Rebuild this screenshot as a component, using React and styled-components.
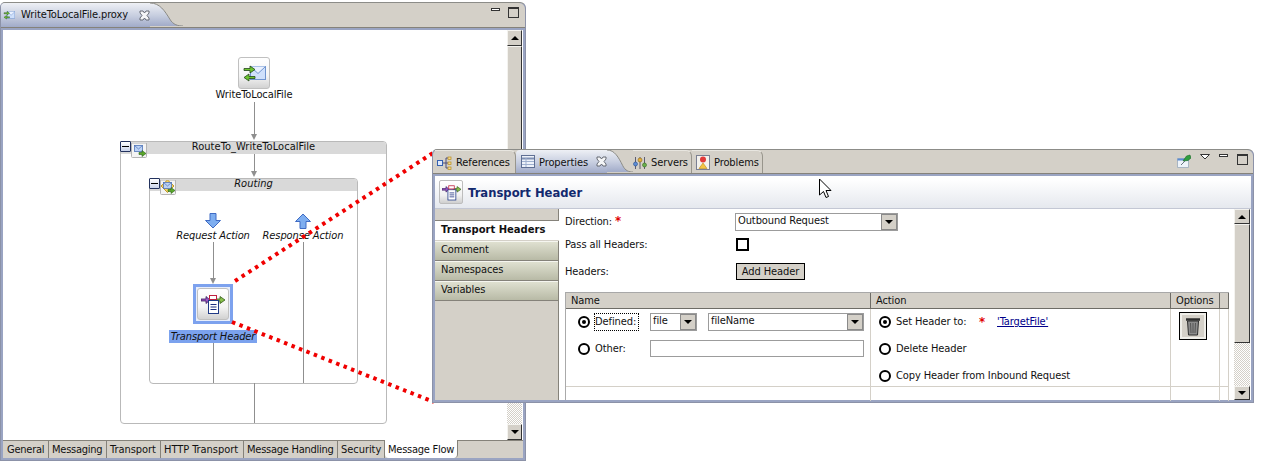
import styled, { createGlobalStyle } from "styled-components";

const GlobalStyle = createGlobalStyle`
  html, body {
    margin: 0;
    padding: 0;
    background: #fff;
  }
  body {
    font-family: "DejaVu Sans Condensed", "DejaVu Sans", sans-serif;
    font-stretch: condensed;
    font-size: 11px;
    letter-spacing: -0.1px;
    color: #111;
  }
`;

const Desktop = styled.div`
  position: relative;
  width: 1264px;
  height: 463px;
  overflow: hidden;
  background: #fff;
`;

const Frame = styled.div`
  position: absolute;
  left: ${(p) => p.$x}px;
  top: ${(p) => p.$y}px;
  width: ${(p) => p.$w}px;
  height: ${(p) => p.$h}px;
  box-sizing: border-box;
  display: flex;
  flex-direction: column;
  background: #9aa4c2;
  border: 1px solid #8c92a8;
  border-top-color: #8c8c88;
  border-radius: 5px 6px 0 0;
  z-index: ${(p) => p.$z};
`;

const TabStrip = styled.div`
  display: flex;
  align-items: stretch;
  height: ${(p) => p.$h}px;
  background: #d4d0c8;
  border-bottom: 1px solid #85827a;
  border-radius: 5px 6px 0 0;
  padding-left: ${(p) => p.$pad || 0}px;
  flex-shrink: 0;
`;

const ActiveTab = styled.div`
  display: flex;
  align-items: stretch;
  flex-shrink: 0;
`;

const ActiveBody = styled.div`
  display: flex;
  align-items: center;
  width: ${(p) => p.$w}px;
  box-sizing: border-box;
  padding-left: ${(p) => p.$pad}px;
  background: linear-gradient(#eef0f5, #c6cddf 55%, #a1abc9);
  border-radius: 4px 0 0 0;
  white-space: nowrap;
`;

const TabLabel = styled.span`
  margin-left: ${(p) => p.$ml}px;
  position: relative;
  top: ${(p) => p.$shift || 0}px;
`;

const CloseMark = styled.svg`
  display: block;
  flex-shrink: 0;
  margin-left: ${(p) => p.$gap}px;
`;

const InactiveTab = styled.div`
  display: flex;
  align-items: center;
  box-sizing: border-box;
  width: ${(p) => p.$w}px;
  padding-left: ${(p) => p.$pad}px;
  padding-top: 1px;
  gap: 4px;
  white-space: nowrap;
  flex-shrink: 0;
  border-right: 1px solid #98958c;
  border-top: 1px solid #e8e6e0;
  border-radius: 0 6px 0 0;
`;

const StripActions = styled.div`
  margin-left: auto;
  display: flex;
  align-items: flex-start;
  padding-top: ${(p) => p.$top}px;
  padding-right: ${(p) => p.$right}px;
  gap: ${(p) => p.$gap}px;
`;

const MinBox = styled.div`
  width: 9px;
  height: 3px;
  margin-top: ${(p) => p.$mt}px;
  border: 1px solid #333;
  box-sizing: border-box;
  background: #fff;
`;

const MaxBox = styled.div`
  width: 11px;
  height: 11px;
  border: 1px solid #333;
  border-top-width: 2px;
  box-sizing: border-box;
`;

const LeftBody = styled.div`
  flex: 1;
  display: flex;
  margin: 2px 2px 0 2px;
  background: #fff;
  min-height: 0;
`;

const Diagram = styled.div`
  position: relative;
  flex: 1;
`;

const ScrollBar = styled.div`
  display: flex;
  flex-direction: column;
  flex-shrink: 0;
  width: ${(p) => p.$w}px;
  margin-right: ${(p) => p.$mr || 0}px;
`;

const ScrollButton = styled.div`
  box-sizing: border-box;
  height: ${(p) => p.$h}px;
  background: #d4d0c8;
  border-top: 1px solid #f4f3ef;
  border-left: 1px solid #f4f3ef;
  border-right: 1px solid #333;
  border-bottom: 1px solid #333;
  display: flex;
  align-items: center;
  justify-content: center;
  flex-shrink: 0;
`;

const ScrollThumb = styled(ScrollButton)`
  display: block;
`;

const ScrollTrack = styled.div`
  flex: 1;
  background: repeating-conic-gradient(#d4d0c8 0 25%, #fff 0 50%) 0 0 / 2px 2px;
`;

const UpMark = styled.div`
  width: 0;
  height: 0;
  border-left: 4px solid transparent;
  border-right: 4px solid transparent;
  border-bottom: 4px solid #000;
`;

const DownMark = styled.div`
  width: 0;
  height: 0;
  border-left: 4px solid transparent;
  border-right: 4px solid transparent;
  border-top: 4px solid #000;
`;

const BottomTabs = styled.div`
  display: flex;
  height: 18px;
  margin: 0 2px;
  background: #d4d0c8;
  border-top: 1px solid #85827a;
  flex-shrink: 0;
  box-sizing: border-box;
`;

const BottomTab = styled.div`
  box-sizing: border-box;
  width: ${(p) => p.$w}px;
  padding-left: ${(p) => p.$pad || 4}px;
  line-height: 17px;
  letter-spacing: ${(p) => (p.$tight ? "-0.25px" : "-0.05px")};
  white-space: nowrap;
  border-right: 1px solid #85827a;
  ${(p) =>
    p.$active &&
    `background:#fff;border-radius:0 0 4px 4px;margin-top:-1px;height:18px;line-height:19px;`}
`;

const BottomRule = styled.div`
  height: 2px;
  flex-shrink: 0;
`;

/* diagram parts, placed on the canvas */
const Scope = styled.div`
  position: absolute;
  left: ${(p) => p.$x}px;
  top: ${(p) => p.$y}px;
  width: ${(p) => p.$w}px;
  height: ${(p) => p.$h}px;
  box-sizing: border-box;
  border: 1px solid #b9b9b9;
  border-radius: 4px;
`;

const ScopeHead = styled.div`
  height: ${(p) => p.$h}px;
  background: #d9d9d9;
  border-radius: 3px 3px 0 0;
  text-align: center;
  letter-spacing: 0.05px;
  line-height: ${(p) => p.$h - 2}px;
  font-style: ${(p) => (p.$italic ? "italic" : "normal")};
`;

const Collapse = styled.div`
  position: absolute;
  left: ${(p) => p.$x}px;
  top: ${(p) => p.$y}px;
  width: 11px;
  height: 11px;
  box-sizing: border-box;
  border: 1px solid #23325e;
  border-radius: 1px;
  background: linear-gradient(#fff, #c9d3ea);
  &::after {
    content: "";
    display: block;
    margin: 4px 1px 0;
    height: 1px;
    background: #000;
  }
`;

const PipeIcon = styled.svg`
  position: absolute;
  left: ${(p) => p.$x}px;
  top: ${(p) => p.$y}px;
`;

const ArrowSpot = styled.div`
  position: absolute;
  left: ${(p) => p.$x}px;
  top: ${(p) => p.$y}px;
`;

const NodeButton = styled.div`
  position: absolute;
  left: ${(p) => p.$x}px;
  top: ${(p) => p.$y}px;
  width: 32px;
  height: 32px;
  box-sizing: border-box;
  border: 1px solid #c0c0c0;
  border-radius: 3px;
  background: linear-gradient(#fff 0%, #f4f4f4 60%, #d2d2d2 100%);
  display: flex;
  align-items: flex-start;
  justify-content: center;
  padding-top: 3px;
`;

const SelectBox = styled.div`
  position: absolute;
  left: ${(p) => p.$x}px;
  top: ${(p) => p.$y}px;
  width: 40px;
  height: 40px;
  box-sizing: border-box;
  border: 3px solid #7da2ee;
  background: #e8eefb;
`;

const NodeLabel = styled.div`
  position: absolute;
  left: ${(p) => p.$cx - 60}px;
  top: ${(p) => p.$y}px;
  width: 120px;
  text-align: center;
  white-space: nowrap;
  line-height: 14px;
  font-style: ${(p) => (p.$italic ? "italic" : "normal")};
`;

const SelectedLabel = styled.div`
  position: absolute;
  left: ${(p) => p.$x}px;
  top: ${(p) => p.$y}px;
  width: 88px;
  height: 13px;
  line-height: 13px;
  text-align: center;
  background: #7ba2ee;
  font-style: italic;
  white-space: nowrap;
`;

const Wire = styled.div`
  position: absolute;
  left: ${(p) => p.$x}px;
  top: ${(p) => p.$y}px;
  width: 1px;
  height: ${(p) => p.$h}px;
  background: #8f8f8f;
`;

const WireHead = styled.div`
  position: absolute;
  left: ${(p) => p.$x - 3}px;
  top: ${(p) => p.$y}px;
  width: 0;
  height: 0;
  border-left: 3.5px solid transparent;
  border-right: 3.5px solid transparent;
  border-top: 6px solid #8f8f8f;
`;

const DotLines = styled.svg`
  position: absolute;
  left: 0;
  top: 0;
  z-index: 2;
`;

const Cursor = styled.svg`
  position: absolute;
  left: 818px;
  top: 178px;
  z-index: 5;
`;

/* right window */
const TitleBar = styled.div`
  display: flex;
  align-items: center;
  gap: 5px;
  height: 32px;
  margin: 2px 2px 0 2px;
  padding-left: 4px;
  flex-shrink: 0;
  background: linear-gradient(#fff 10%, #e5e8ee);
  border-bottom: 1px solid #c3c7d4;
`;

const TitleText = styled.div`
  font-family: "DejaVu Sans", sans-serif;
  font-stretch: normal;
  font-weight: bold;
  font-size: 11.6px;
  letter-spacing: 0;
  padding-top: 1px;
  color: #12296e;
`;

const TitleButton = styled.div`
  width: 24px;
  height: 24px;
  box-sizing: border-box;
  border: 1px solid #bdbdbd;
  border-radius: 2px;
  background: linear-gradient(#fff, #f1f1f1 65%, #cfcfcf);
  display: flex;
  align-items: center;
  justify-content: center;
`;

const PanelBody = styled.div`
  flex: 1;
  display: flex;
  margin: 0 2px;
  background: #fff;
  min-height: 0;
`;

const Sidebar = styled.div`
  width: 124px;
  flex-shrink: 0;
  background: #d4d0c8;
  border-right: 1px solid #85827a;
  box-sizing: border-box;
  display: flex;
  flex-direction: column;
`;

const SideCap = styled.div`
  height: 12px;
  flex-shrink: 0;
  box-sizing: border-box;
  border-bottom: 1px solid #85827a;
`;

const SideItem = styled.div`
  height: 20px;
  flex-shrink: 0;
  box-sizing: border-box;
  padding-left: 6px;
  line-height: 16px;
  background: linear-gradient(#dfe0d0, #b8baa6);
  border-top: 1px solid #f6f6f0;
  border-bottom: 1px solid #85827a;
  ${(p) =>
    p.$active &&
    `background:#fff;font-weight:bold;border-top:none;margin-right:-1px;border-bottom:1px solid #d4d0c8;font-family:"DejaVu Sans",sans-serif;font-size:10px;font-stretch:normal;letter-spacing:0;line-height:18px;`}
`;

const Content = styled.div`
  flex: 1;
  min-width: 0;
  padding: 3px 6px 0 6px;
  display: flex;
  flex-direction: column;
`;

const FormRow = styled.div`
  display: grid;
  grid-template-columns: 171px 1fr;
  align-items: center;
  height: ${(p) => p.$h}px;
  flex-shrink: 0;
`;

const FirstLabel = styled.div`
  padding-bottom: 2px;
`;

const Star = styled.span`
  color: #e00000;
  font-weight: bold;
  font-size: 13px;
  margin-left: ${(p) => p.$ml || 3}px;
`;

const Combo = styled.div`
  box-sizing: border-box;
  display: flex;
  width: ${(p) => p.$w}px;
  height: 18px;
  margin-left: ${(p) => p.$ml || 0}px;
  background: #fff;
  border: 1px solid #9c9c9c;
  flex-shrink: 0;
`;

const ComboText = styled.div`
  flex: 1;
  padding-left: 2px;
  line-height: 14px;
  white-space: nowrap;
`;

const ComboArrow = styled.div`
  width: 16px;
  box-sizing: border-box;
  background: #d4d0c8;
  border: 1px solid #8a8a8a;
  display: flex;
  align-items: center;
  justify-content: center;
`;

const CheckBox = styled.div`
  width: 13px;
  height: 13px;
  box-sizing: border-box;
  border: 2px solid #000;
  background: #fff;
`;

const PushButton = styled.div`
  width: 69px;
  height: 17px;
  box-sizing: border-box;
  border: 1px solid #000;
  background: #d4d0c8;
  text-align: center;
  line-height: 15px;
`;

const Table = styled.div`
  width: 663px;
  margin-top: 7px;
  display: flex;
  flex-direction: column;
  flex: 1;
  min-height: 0;
  border-left: 1px solid #aaa;
`;

const TableHead = styled.div`
  display: grid;
  grid-template-columns: 305px 300px 49px 9px;
  height: 17px;
  flex-shrink: 0;
  background: #d4d0c8;
  border-top: 1px solid #a8a8a8;
  border-bottom: 1px solid #6e6c66;
  box-sizing: border-box;
`;

const HeadCell = styled.div`
  box-sizing: border-box;
  padding-left: 5px;
  line-height: 15px;
  border-right: 1px solid #6e6c66;
`;

const TableRow = styled.div`
  display: grid;
  grid-template-columns: 305px 300px 49px 9px;
  height: ${(p) => p.$h}px;
  flex-shrink: 0;
  box-sizing: border-box;
  border-bottom: ${(p) => (p.$last ? "none" : "1px solid #d4d0c8")};
`;

const Cell = styled.div`
  box-sizing: border-box;
  border-right: 1px solid #d4d0c8;
  display: flex;
  flex-direction: column;
  padding: ${(p) => p.$pad || "0"};
`;

const OptionRow = styled.div`
  display: flex;
  align-items: center;
  height: 27px;
  flex-shrink: 0;
  &:first-child {
    margin-top: -1px;
  }
`;

const Radio = styled.div`
  width: 12px;
  height: 12px;
  box-sizing: border-box;
  border: 2px solid #000;
  border-radius: 50%;
  background: #fff;
  margin-right: 5px;
  flex-shrink: 0;
  display: flex;
  align-items: center;
  justify-content: center;
  &::after {
    content: "";
    display: ${(p) => (p.$on ? "block" : "none")};
    width: 4px;
    height: 4px;
    border-radius: 50%;
    background: #000;
  }
`;

const FocusLabel = styled.div`
  outline: 1px dotted #000;
  width: 43px;
  height: 16px;
  line-height: 16px;
  flex-shrink: 0;
`;

const PlainLabel = styled.div`
  width: ${(p) => p.$w || "auto"};
  white-space: nowrap;
  flex-shrink: 0;
`;

const TextInput = styled.div`
  width: 214px;
  height: 17px;
  box-sizing: border-box;
  border: 1px solid #9c9c9c;
  background: #fff;
  margin-left: 12px;
`;

const TargetLink = styled.a`
  color: #00008b;
  text-decoration: underline;
  margin-left: 12px;
`;

const TrashButton = styled.div`
  width: 28px;
  height: 28px;
  margin-top: 3px;
  box-sizing: border-box;
  border: 1px solid #000;
  background: #d4d0c8;
  display: flex;
  align-items: center;
  justify-content: center;
  box-shadow: inset 0 0 0 2px #efeee9;
`;

const ProxyGlyph = ({ size = 24 }) => (
  <svg width={size} height={size} viewBox="0 0 24 24">
    <rect x="8.500" y="5.500" width="15" height="13" fill="#cfe0fb" stroke="#6f94cf" />
    <path d="M8.500 5.500l7.500 7 7.500-7" fill="#eaf1ff" stroke="#6f94cf" />
    <path d="M2 7.500h6V5l5 3.500-5 3.500V9.500H2z" fill="#6cc52e" stroke="#23461a" strokeWidth=".8" />
    <path d="M13 15.500H7V13l-5 3.500L7 20v-2.500h6z" fill="#6cc52e" stroke="#23461a" strokeWidth=".8" />
  </svg>
);

const HeaderGlyph = ({ size = 24 }) => (
  <svg width={size} height={size} viewBox="0 0 24 24">
    <path d="M0 7h5V4.500L9 8l-4 3.500V9H0z" fill="#9a55c0" stroke="#35175e" strokeWidth=".8" />
    <path d="M14 7h5V4.500L24 8l-5 3.500V9h-5z" fill="#88c04c" stroke="#33591b" strokeWidth=".8" />
    <rect x="7.500" y="8.500" width="10" height="13" fill="#fff" stroke="#203a86" />
    <path d="M9.500 12.500h6M9.500 15h6M9.500 17.500h6" stroke="#1d2f80" strokeWidth="1" />
    <rect x="8.500" y="3.500" width="7" height="4" fill="#fff" stroke="#c02040" />
  </svg>
);

const PipeEnvelope = ({ x, y, diamond }) => (
  <PipeIcon $x={x} $y={y} width="16" height="15" viewBox="0 0 16 15">
    <path d="M.5 0v13.500a1 1 0 0 0 1 1h13a1 1 0 0 0 1-1V0z" fill="#f4f4f4" stroke="#b4b4b4" />
    {diamond && <path d="M7.500 0l6.500 6-6.500 6.500L1 6z" fill="#f5d265" stroke="#c09a2c" />}
    <rect x="3.500" y="2.500" width="8" height="6" fill="#bcd2f5" stroke="#4f74b8" strokeWidth=".8" />
    <path d="M3.500 2.500l4 3.500 4-3.500" fill="none" stroke="#4f74b8" strokeWidth=".7" />
    <path d="M8 9.500h3V7.500l4 3-4 3v-2H8z" fill="#5aa92a" stroke="#2a5f17" strokeWidth=".6" />
  </PipeIcon>
);

const ClosePath = ({ gap }) => (
  <CloseMark $gap={gap} width="11" height="11" viewBox="0 0 11 11">
    <path d="M1 1h3l1.500 2L7 1h3v2L8 5.500 10 8v2H7L5.500 8 4 10H1V8l2-2.500L1 3z" fill="#f4f5f7" stroke="#5a5f68" strokeWidth=".9" />
  </CloseMark>
);

const BlockArrow = ({ up }) => (
  <svg width="16" height="16" viewBox="0 0 16 16" style={up ? { transform: "scaleY(-1)" } : undefined}>
    <path d="M5 .5h6v7h4.500L8 15 .5 7.500H5z" fill="#7eaef0" stroke="#3f6bc4" />
  </svg>
);

const TabCurve = ({ w, h, id }) => (
  <svg width={w} height={h} viewBox={`0 0 ${w} ${h}`} style={{ display: "block", flexShrink: 0 }}>
    <defs>
      <linearGradient id={id} x1="0" y1="0" x2="0" y2="1">
        <stop offset="0" stopColor="#eef0f5" />
        <stop offset=".55" stopColor="#c6cddf" />
        <stop offset="1" stopColor="#a1abc9" />
      </linearGradient>
    </defs>
    <path d={`M0 0C${w * 0.3} 0 ${w * 0.45} ${h * 0.35} ${w * 0.6} ${h * 0.7}C${w * 0.7} ${h * 0.95} ${w * 0.85} ${h} ${w} ${h}H0z`} fill={`url(#${id})`} />
    <path d={`M0 0C${w * 0.3} 0 ${w * 0.45} ${h * 0.35} ${w * 0.6} ${h * 0.7}C${w * 0.7} ${h * 0.95} ${w * 0.85} ${h} ${w} ${h}`} fill="none" stroke="#8b8b86" />
  </svg>
);

const WindowActions = ({ top, right, gap, minTop, menu }) => (
  <StripActions $top={top} $right={right} $gap={gap}>
    {menu && (
      <>
        <svg width="14" height="14" viewBox="0 0 14 14">
          <path d="M.5 4.500h11v9H.5z" fill="#eef3fa" stroke="#9ab" strokeWidth=".8" />
          <path d="M.5 4.500h11v2H.5z" fill="#5b8ad0" />
          <path d="M6 7l3.500-5L13 1l1 3-3 2.500z" fill="#2f9e3f" stroke="#1c6a28" strokeWidth=".6" />
          <path d="M8 7l-4 4" stroke="#456" strokeWidth=".8" />
        </svg>
        <svg width="10" height="6" viewBox="0 0 10 6">
          <path d="M.5.500h9L5 5z" fill="#fff" stroke="#333" />
        </svg>
      </>
    )}
    <MinBox $mt={minTop} />
    <MaxBox />
  </StripActions>
);

const App = () => {
  return (
    <Desktop>
      <GlobalStyle />

      <Frame $x={0} $y={2} $w={526} $h={459} $z={1}>
        <TabStrip $h={24}>
          <ActiveTab>
            <ActiveBody $w={149} $pad={2}>
              <ProxyGlyph size={18} />
              <TabLabel $ml={6} $shift={-1}>WriteToLocalFile.proxy</TabLabel>
              <ClosePath gap={11} />
            </ActiveBody>
            <TabCurve w={33} h={23} id="leftTab" />
          </ActiveTab>
          <WindowActions top={4} right={6} gap={8} minTop={1} />
        </TabStrip>
        <LeftBody>
          <Diagram>
            <NodeButton $x={235} $y={27}>
              <ProxyGlyph />
            </NodeButton>
            <NodeLabel $cx={251} $y={58}>WriteToLocalFile</NodeLabel>
            <Wire $x={251} $y={72} $h={32} />
            <WireHead $x={251} $y={104} />

            <Scope $x={117} $y={111} $w={267} $h={283}>
              <ScopeHead $h={12}>RouteTo_WriteToLocalFile</ScopeHead>
            </Scope>
            <Collapse $x={117} $y={111} />
            <PipeEnvelope x={128} y={113} />
            <Wire $x={251} $y={124} $h={18} />
            <WireHead $x={251} $y={141} />

            <Scope $x={146} $y={148} $w={209} $h={206}>
              <ScopeHead $h={12} $italic>Routing</ScopeHead>
            </Scope>
            <Collapse $x={146} $y={148} />
            <PipeEnvelope x={157} y={150} diamond />

            <ArrowSpot $x={202} $y={183}><BlockArrow /></ArrowSpot>
            <ArrowSpot $x={292} $y={183}><BlockArrow up /></ArrowSpot>
            <NodeLabel $cx={210} $y={199} $italic>Request Action</NodeLabel>
            <NodeLabel $cx={300} $y={199} $italic>Response Action</NodeLabel>

            <Wire $x={210} $y={212} $h={38} />
            <WireHead $x={210} $y={248} />
            <Wire $x={300} $y={212} $h={141} />

            <SelectBox $x={190} $y={254} />
            <NodeButton $x={194} $y={258}>
              <HeaderGlyph />
            </NodeButton>
            <SelectedLabel $x={166} $y={300}>Transport Header</SelectedLabel>
            <Wire $x={210} $y={313} $h={40} />
            <Wire $x={251} $y={353} $h={40} />
          </Diagram>
          <ScrollBar $w={15} $mr={1}>
            <ScrollButton $h={16}><UpMark /></ScrollButton>
            <ScrollThumb $h={355} />
            <ScrollTrack />
            <ScrollButton $h={16}><DownMark /></ScrollButton>
          </ScrollBar>
        </LeftBody>
        <BottomTabs>
          <BottomTab $w={46} $tight>General</BottomTab>
          <BottomTab $w={58} $pad={3} $tight>Messaging</BottomTab>
          <BottomTab $w={54} $pad={3}>Transport</BottomTab>
          <BottomTab $w={83} $pad={3}>HTTP Transport</BottomTab>
          <BottomTab $w={94} $pad={3} $tight>Message Handling</BottomTab>
          <BottomTab $w={47} $pad={3}>Security</BottomTab>
          <BottomTab $w={73} $pad={3} $active $tight>Message Flow</BottomTab>
        </BottomTabs>
        <BottomRule />
      </Frame>

      <DotLines width="1264" height="463">
        <line x1="235" y1="281" x2="436" y2="151" stroke="#f00000" strokeWidth="4" strokeDasharray="3.5 4.5" />
        <line x1="232" y1="322" x2="434" y2="402" stroke="#f00000" strokeWidth="4" strokeDasharray="3.5 4.5" />
      </DotLines>

      <Frame $x={432} $y={149} $w={822} $h={254} $z={3}>
        <TabStrip $h={23} $pad={2}>
          <InactiveTab $w={81} $pad={2}>
            <svg width="15" height="14" viewBox="0 0 15 14">
              <rect x=".5" y="4.500" width="5" height="5" fill="#dfe9fb" stroke="#3560b0" />
              <path d="M6 7h3M9 2v10M9 2h2M9 7h2M9 12h2" stroke="#4c4c7a" fill="none" />
              <rect x="11" y="1" width="3" height="2.500" fill="#f5d98b" stroke="#b58a1e" strokeWidth=".7" />
              <rect x="11" y="6" width="3" height="2.500" fill="#f5d98b" stroke="#b58a1e" strokeWidth=".7" />
              <rect x="11" y="11" width="3" height="2.500" fill="#f5d98b" stroke="#b58a1e" strokeWidth=".7" />
            </svg>
            <span>References</span>
          </InactiveTab>
          <ActiveTab>
            <ActiveBody $w={91} $pad={5}>
              <svg width="14" height="13" viewBox="0 0 14 13">
                <rect x=".5" y=".5" width="13" height="12" fill="#eef2fa" stroke="#5f6f94" />
                <path d="M1 3.500h12" stroke="#7f90b4" strokeWidth="2" />
                <path d="M1 6.500h12M1 9.500h12M5 3v9" stroke="#9fb0cf" />
              </svg>
              <TabLabel $ml={4} $shift={1}>Properties</TabLabel>
              <ClosePath gap={8} />
            </ActiveBody>
            <TabCurve w={26} h={22} id="rightTab" />
          </ActiveTab>
          <InactiveTab $w={59} $pad={0}>
            <svg width="14" height="14" viewBox="0 0 14 14">
              <path d="M2.500 1v12M7 1v12M11.500 1v12" stroke="#5d5d70" />
              <circle cx="2.500" cy="8" r="2" fill="#5f8ed6" stroke="#274d8d" strokeWidth=".6" />
              <circle cx="7" cy="4" r="2" fill="#e8b23a" stroke="#8a6414" strokeWidth=".6" />
              <circle cx="11.500" cy="9" r="2" fill="#6ab04c" stroke="#33691e" strokeWidth=".6" />
            </svg>
            <span>Servers</span>
          </InactiveTab>
          <InactiveTab $w={71} $pad={4}>
            <svg width="14" height="15" viewBox="0 0 14 15">
              <rect x=".5" y=".5" width="13" height="14" fill="#f3f1ec" stroke="#7a7f92" />
              <circle cx="7" cy="4.500" r="3" fill="#e23a3a" />
              <path d="M7 8l4 5.500H3z" fill="#f4c443" stroke="#b8871a" strokeWidth=".6" />
            </svg>
            <span>Problems</span>
          </InactiveTab>
          <WindowActions top={4} right={5} gap={9} minTop={0} menu />
        </TabStrip>
        <TitleBar>
          <TitleButton>
            <HeaderGlyph size={19} />
          </TitleButton>
          <TitleText>Transport Header</TitleText>
        </TitleBar>
        <PanelBody>
          <Sidebar>
            <SideCap />
            <SideItem $active>Transport Headers</SideItem>
            <SideItem>Comment</SideItem>
            <SideItem>Namespaces</SideItem>
            <SideItem>Variables</SideItem>
          </Sidebar>
          <Content>
            <FormRow $h={19}>
              <FirstLabel>Direction:<Star>*</Star></FirstLabel>
              <Combo $w={163} $ml={-1}>
                <ComboText>Outbound Request</ComboText>
                <ComboArrow><DownMark /></ComboArrow>
              </Combo>
            </FormRow>
            <FormRow $h={27}>
              <div>Pass all Headers:</div>
              <CheckBox />
            </FormRow>
            <FormRow $h={27}>
              <div>Headers:</div>
              <PushButton>Add Header</PushButton>
            </FormRow>
            <Table>
              <TableHead>
                <HeadCell>Name</HeadCell>
                <HeadCell>Action</HeadCell>
                <HeadCell>Options</HeadCell>
                <HeadCell />
              </TableHead>
              <TableRow $h={78}>
                <Cell $pad="0 0 0 12px">
                  <OptionRow>
                    <Radio $on />
                    <FocusLabel>Defined:</FocusLabel>
                    <Combo $w={47} $ml={12}>
                      <ComboText>file</ComboText>
                      <ComboArrow><DownMark /></ComboArrow>
                    </Combo>
                    <Combo $w={156} $ml={11}>
                      <ComboText>fileName</ComboText>
                      <ComboArrow><DownMark /></ComboArrow>
                    </Combo>
                  </OptionRow>
                  <OptionRow>
                    <Radio />
                    <PlainLabel $w="43px">Other:</PlainLabel>
                    <TextInput />
                  </OptionRow>
                </Cell>
                <Cell $pad="0 0 0 8px">
                  <OptionRow>
                    <Radio $on />
                    <PlainLabel $w="71px">Set Header to:</PlainLabel>
                    <Star $ml={12}>*</Star>
                    <TargetLink>'TargetFile'</TargetLink>
                  </OptionRow>
                  <OptionRow>
                    <Radio />
                    <PlainLabel>Delete Header</PlainLabel>
                  </OptionRow>
                  <OptionRow>
                    <Radio />
                    <PlainLabel>Copy Header from Inbound Request</PlainLabel>
                  </OptionRow>
                </Cell>
                <Cell $pad="0 0 0 8px">
                  <TrashButton>
                    <svg width="16" height="20" viewBox="0 0 16 20">
                      <path d="M1 3.500h14" stroke="#2e2e2e" strokeWidth="2.500" />
                      <path d="M2.500 5h11l-1 14h-9z" fill="#8b8b8b" stroke="#2e2e2e" />
                      <path d="M5.500 7l.5 10M8 7v10M10.500 7l-.5 10" stroke="#555" />
                    </svg>
                  </TrashButton>
                </Cell>
                <Cell />
              </TableRow>
              <TableRow $h={14} $last>
                <Cell />
                <Cell />
                <Cell />
                <Cell />
              </TableRow>
            </Table>
          </Content>
          <ScrollBar $w={16} $mr={1}>
            <ScrollButton $h={15}><UpMark /></ScrollButton>
            <ScrollThumb $h={119} />
            <ScrollTrack />
            <ScrollButton $h={14}><DownMark /></ScrollButton>
          </ScrollBar>
        </PanelBody>
        <BottomRule />
      </Frame>

      <Cursor width="14" height="22" viewBox="0 0 14 22">
        <path d="M1.500 1v16l4-3.500 2.500 6 2.500-1-2.500-6h5z" fill="#fff" stroke="#000" />
      </Cursor>
    </Desktop>
  );
};

export default App;
